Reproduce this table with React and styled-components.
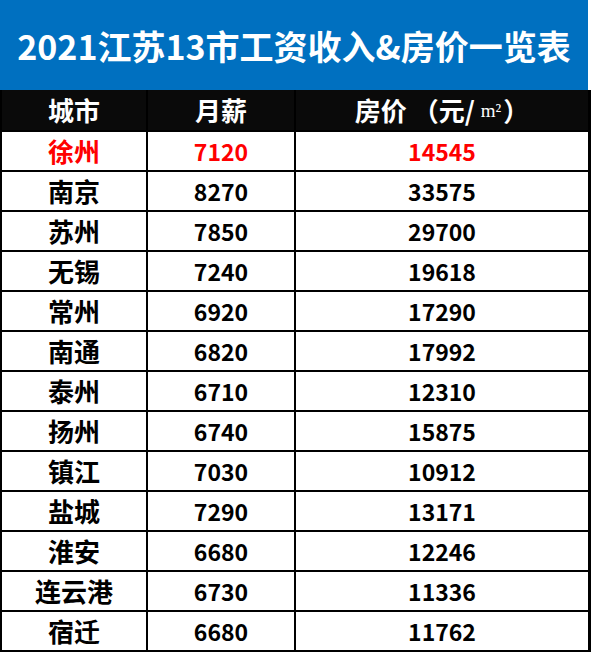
import React from 'react'
import styled, { createGlobalStyle } from 'styled-components'

const rows = [
    ['徐州', '7120', '14545'],
    ['南京', '8270', '33575'],
    ['苏州', '7850', '29700'],
    ['无锡', '7240', '19618'],
    ['常州', '6920', '17290'],
    ['南通', '6820', '17992'],
    ['泰州', '6710', '12310'],
    ['扬州', '6740', '15875'],
    ['镇江', '7030', '10912'],
    ['盐城', '7290', '13171'],
    ['淮安', '6680', '12246'],
    ['连云港', '6730', '11336'],
    ['宿迁', '6680', '11762'],
]

const GlobalStyle = createGlobalStyle`
    html, body {
        margin: 0;
        padding: 0;
        background: #fff;
    }
    body {
        font-family: "Noto Sans CJK SC", "Noto Sans", sans-serif;
    }
`

const Page = styled.div`
    width: 591px;
    height: 652px;
    display: flex;
    flex-direction: column;
`

const Title = styled.div`
    width: 588px;
    height: 90px;
    background: #0070c0;
    color: #fff;
    font-size: 34px;
    font-weight: 700;
    display: flex;
    align-items: center;
    justify-content: center;
`

const Grid = styled.div`
    flex: 1;
    display: grid;
    grid-template-columns: 144px 146px 292px;
    grid-template-rows: 40px repeat(13, 38px);
    gap: 2px;
    padding: 0 3px 2px 2px;
    background: #000;
`

const Cell = styled.div`
    display: flex;
    align-items: center;
    justify-content: center;
    background: ${({ $head }) => ($head ? '#0a0a0a' : '#fff')};
    color: ${({ $head, $hot }) => ($head ? '#fff' : $hot ? '#ff0000' : '#000')};
    font-size: ${({ $city }) => ($city ? '26px' : '23px')};
    font-weight: 700;
    line-height: 1;
`

const Paren = styled.span`
    margin-left: 6px;
`

const Unit = styled.span`
    font-size: 19px;
    font-family: "Liberation Serif", serif;
    font-weight: 400;
    margin: 0 2px 0 6px;
`

const App = () => (
    <Page>
        <GlobalStyle />
        <Title>2021江苏13市工资收入&amp;房价一览表</Title>
        <Grid>
            <Cell $head $city>城市</Cell>
            <Cell $head $city>月薪</Cell>
            <Cell $head $city>
                房价<Paren>（元/</Paren><Unit>m²</Unit>）
            </Cell>
            {rows.map(([city, pay, price], i) => (
                <React.Fragment key={city}>
                    <Cell $city $hot={i === 0}>{city}</Cell>
                    <Cell $hot={i === 0}>{pay}</Cell>
                    <Cell $hot={i === 0}>{price}</Cell>
                </React.Fragment>
            ))}
        </Grid>
    </Page>
)

export default App
